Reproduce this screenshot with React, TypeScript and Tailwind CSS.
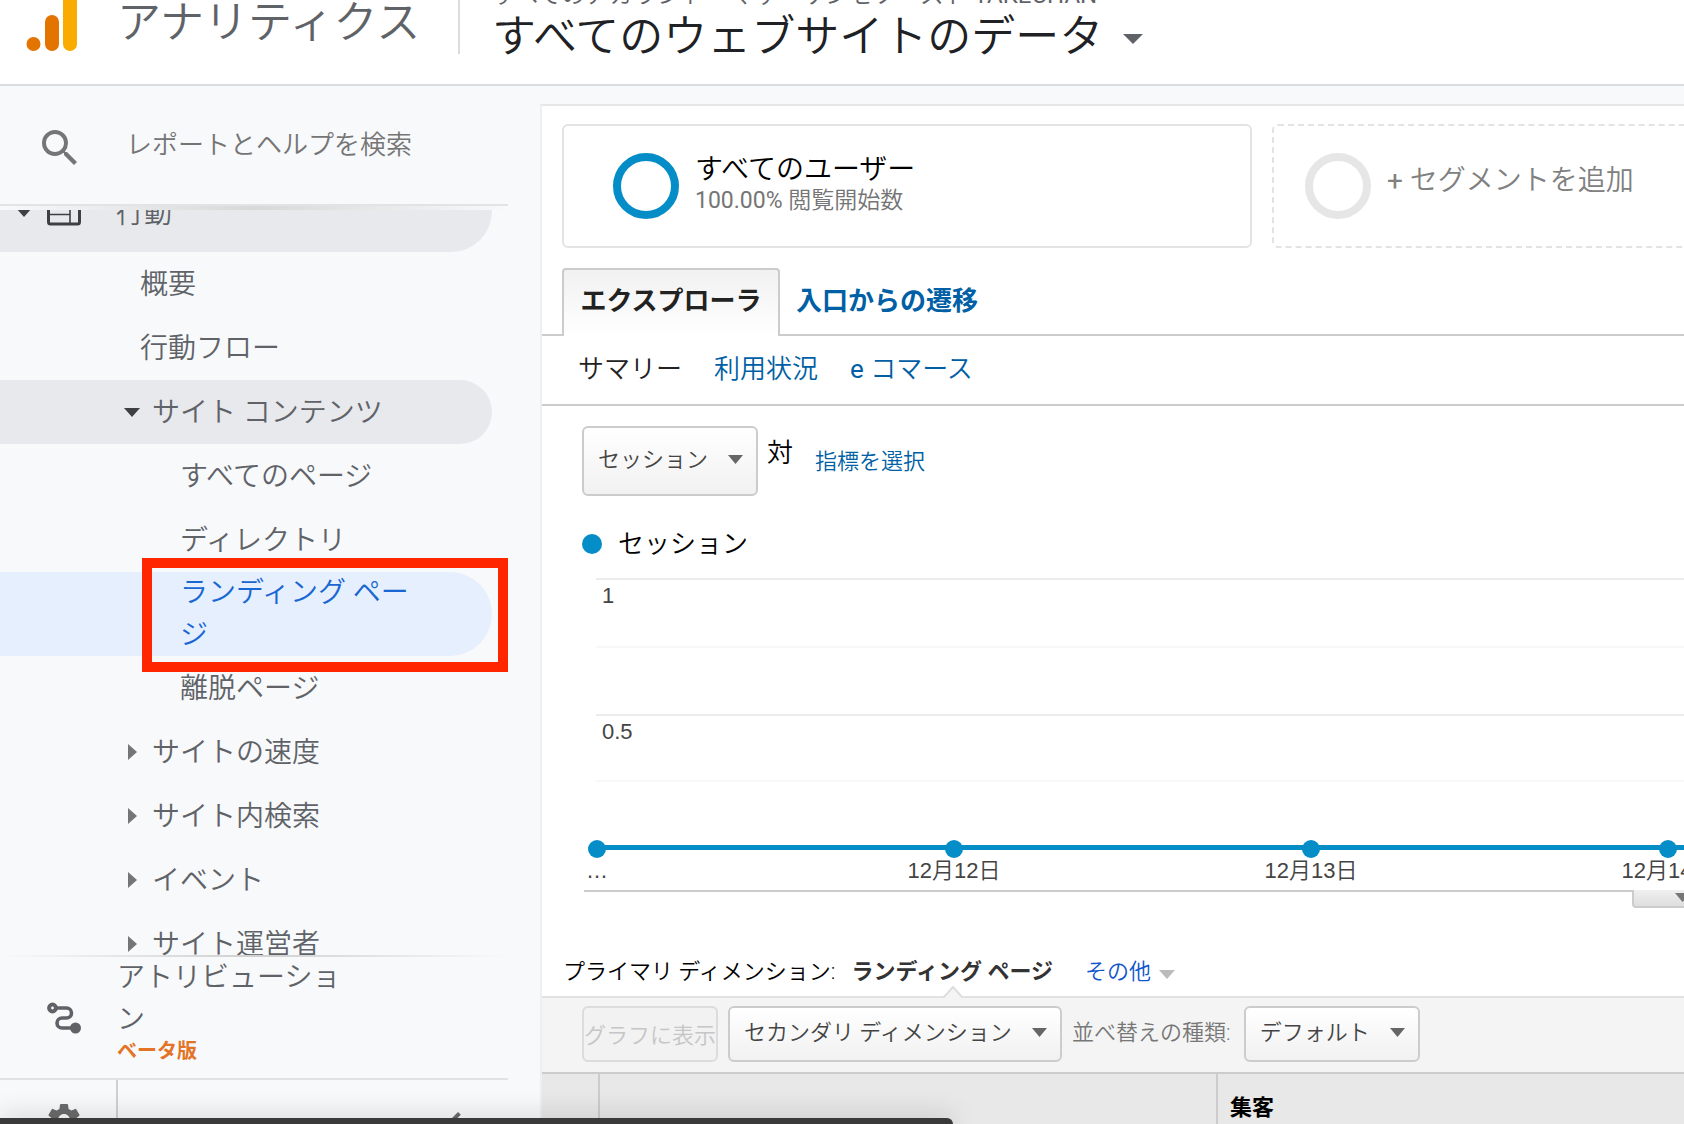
import React from 'react';
import { clsx } from 'clsx';
import { MdChevronLeft, MdSearch, MdSettings } from 'react-icons/md';

interface CaretProps {
  className?: string;
  direction?: 'down' | 'right';
}

/** Small solid triangle used by menus and tree nodes. */
function Caret({ className, direction = 'down' }: CaretProps) {
  return (
    <svg
      className={clsx('shrink-0 fill-current', className)}
      viewBox={direction === 'down' ? '0 0 16 9' : '0 0 9 16'}
      preserveAspectRatio="none"
      aria-hidden="true"
    >
      <path d={direction === 'down' ? 'M0 0h16L8 9z' : 'M0 0v16l9-8z'} />
    </svg>
  );
}

function AnalyticsLogo() {
  return (
    <svg className="h-[52px] w-[52px] shrink-0" viewBox="0 0 52 52" aria-hidden="true">
      <rect x="37" y="-20" width="14" height="71" rx="7" fill="#f9ab00" />
      <rect x="19" y="15" width="14" height="36" rx="7" fill="#e37400" />
      <circle cx="7.5" cy="44" r="7" fill="#e37400" />
    </svg>
  );
}

function BehaviorIcon() {
  return (
    <svg className="h-[30px] w-[34px] shrink-0" viewBox="0 0 34 30" fill="none" stroke="#3c4043" aria-hidden="true">
      <rect x="1.5" y="1" width="31" height="26" rx="2" strokeWidth="3" />
      <path d="M1 9h32" strokeWidth="3" />
      <path d="M3 17.5h20M23 9v18" strokeWidth="1.6" />
    </svg>
  );
}

function AttributionIcon() {
  return (
    <svg className="h-[32px] w-[34px] shrink-0" viewBox="0 0 34 32" fill="none" aria-hidden="true">
      <path
        d="M8 6h11.500a5 5 0 0 1 0 10H15a5 5 0 0 0 0 10h12"
        stroke="#5f6368"
        strokeWidth="3.6"
      />
      <circle cx="5.5" cy="6" r="3.4" stroke="#5f6368" strokeWidth="4" />
      <circle cx="28.5" cy="26" r="5.5" fill="#5f6368" />
    </svg>
  );
}

function Header() {
  return (
    <header className="flex h-[86px] shrink-0 border-b-2 border-[#dadce0] bg-white">
      <div className="flex h-[54px] w-[460px] shrink-0 items-start border-r-2 border-[#dadce0] pl-[26px]">
        <AnalyticsLogo />
        <span className="ml-[39px] text-[44px] leading-[46px] whitespace-nowrap text-[#5f6368]">アナリティクス</span>
      </div>
      <div className="flex flex-col justify-end pb-[19px] pl-8 whitespace-nowrap">
        <span className="h-[28px] shrink-0 text-[24px] leading-[28px] text-[#5f6368]">
          すべてのアカウント &gt; マザーサンセゾースト <span className="font-normal">TAKECHAN</span>
        </span>
        <button type="button" className="flex h-14 shrink-0 items-center gap-5 text-[44px] leading-[56px] text-[#202124]">
          すべてのウェブサイトのデータ
          <Caret className="mt-1 h-[10px] w-[20px] text-[#5f6368]" />
        </button>
      </div>
    </header>
  );
}

interface NavItemProps {
  label: string;
  level?: 1 | 2;
  arrow?: 'down' | 'right';
  highlighted?: boolean;
}

function NavItem({ label, level = 1, arrow, highlighted }: NavItemProps) {
  return (
    <li>
      <a
        href="#"
        className={clsx(
          'mr-4 flex h-16 items-center rounded-r-full pt-[2px]',
          highlighted && 'bg-[#e8e9ed]',
          arrow ? 'pl-[124px]' : level === 1 ? 'pl-[140px]' : 'pl-[180px]',
        )}
      >
        {arrow && (
          <span className="flex w-[28px] pb-[2px]">
            {arrow === 'down' ? (
              <Caret className="h-[9px] w-[16px] text-[#3c4043]" />
            ) : (
              <Caret direction="right" className="ml-1 h-[16px] w-[9px] text-[#757575]" />
            )}
          </span>
        )}
        {label}
      </a>
    </li>
  );
}

function Sidebar() {
  return (
    <aside className="flex w-[508px] shrink-0 flex-col text-[28px] text-[#5f6368]">
      <label className="flex h-[120px] shrink-0 items-center border-b-2 border-[#e2e3e4] pl-[36px]">
        <MdSearch className="mt-[6px] h-12 w-12 shrink-0 text-[#757575]" />
        <input
          type="search"
          aria-label="レポートとヘルプを検索"
          placeholder="レポートとヘルプを検索"
          className="ml-[42px] h-12 min-w-0 flex-1 bg-transparent text-[26px] outline-none placeholder:text-[#757575]"
        />
      </label>
      <div className="h-1 shrink-0 bg-linear-to-r from-transparent via-[#d8d8d8] to-transparent" />

      <nav className="min-h-0 flex-1 overflow-hidden">
        {/* the list is scrolled a little past its first row */}
        <ul className="-mt-10">
          <li>
            <a href="#" className="mr-4 flex h-[82px] items-center rounded-r-full bg-[#e8e9ed] pt-[2px] pl-4">
              <Caret className="h-[9px] w-[16px] text-[#3c4043]" />
              <span className="ml-[15px]">
                <BehaviorIcon />
              </span>
              <span className="ml-[35px] pt-[3px]">行動</span>
            </a>
          </li>
          <NavItem label="概要" />
          <NavItem label="行動フロー" />
          <NavItem label="サイト コンテンツ" arrow="down" highlighted />
          <NavItem label="すべてのページ" level={2} />
          <NavItem label="ディレクトリ" level={2} />
          <li className="relative">
            <a
              href="#"
              aria-current="page"
              className="mr-4 block rounded-r-full bg-[#e6effd] pr-[60px] pl-[180px] leading-[42px] text-[#1967d2]"
            >
              ランディング ページ
            </a>
            <div className="pointer-events-none absolute -top-[14px] right-0 -bottom-4 left-[142px] z-10 border-[10px] border-[#ff2600]" />
          </li>
          <NavItem label="離脱ページ" level={2} />
          <NavItem label="サイトの速度" arrow="right" />
          <NavItem label="サイト内検索" arrow="right" />
          <NavItem label="イベント" arrow="right" />
          <NavItem label="サイト運営者" arrow="right" />
        </ul>
      </nav>

      <div className="h-[2px] shrink-0 bg-linear-to-r from-transparent via-[#d0d0d0] to-transparent" />
      <a href="#" className="flex h-[121px] shrink-0 items-center pl-[47px]">
        <AttributionIcon />
        <span className="ml-9 w-[240px] pb-[18px] leading-[42px]">
          アトリビューション
          <span className="block text-[20px] leading-[20px] font-bold text-[#e37426]">ベータ版</span>
        </span>
      </a>
      <div className="flex h-[46px] shrink-0 border-t-2 border-[#e0e2e3]">
        <button
          type="button"
          aria-label="管理"
          className="flex w-[118px] shrink-0 items-start border-r-2 border-[#cfd0d1] pt-5 pl-11 text-[#6b6b6b]"
        >
          <MdSettings className="h-10 w-10 shrink-0" />
        </button>
        <button type="button" aria-label="折りたたむ" className="flex flex-1 items-start justify-end pt-5 pr-[30px] text-[#6b6b6b]">
          <MdChevronLeft className="h-12 w-12 shrink-0" />
        </button>
      </div>
    </aside>
  );
}

function Segments() {
  return (
    <div className="flex gap-5 px-5 pt-[18px]">
      <div className="flex h-[124px] w-[690px] shrink-0 items-center rounded-md border-2 border-[#e3e3e3] pl-[49px]">
        <span className="h-[66px] w-[66px] shrink-0 rounded-full border-8 border-[#058dc7]" />
        <div className="ml-4 pb-1 whitespace-nowrap">
          <p className="text-[28px] leading-[34px] text-black">すべてのユーザー</p>
          <p className="text-[23px] leading-[28px] text-[#757575]">
            <span className="font-normal">100.00%</span> 閲覧開始数
          </p>
        </div>
      </div>
      <button
        type="button"
        className="-mr-16 flex h-[124px] flex-1 items-center rounded-md border-2 border-dashed border-[#e3e3e3] pl-[31px] text-[28px] whitespace-nowrap text-[#808080]"
      >
        <span className="h-[66px] w-[66px] shrink-0 rounded-full border-8 border-[#e6e6e6]" />
        <span className="ml-4 pb-[10px]">
          <span className="font-normal">+</span> セグメントを追加
        </span>
      </button>
    </div>
  );
}

function Tabs() {
  return (
    <>
      <div className="mt-5 flex text-[26px] font-bold whitespace-nowrap">
        <span className="w-5 border-b-2 border-[#cccccc]" />
        <button
          type="button"
          className="h-[68px] w-[218px] rounded-t-sm border-2 border-b-0 border-[#cccccc] bg-linear-to-b from-[#f1f1f1] to-white pb-1 text-[#222222]"
        >
          エクスプローラ
        </button>
        <div className="flex flex-1 items-center border-b-2 border-[#cccccc] pl-4">
          <a href="#" className="text-[#005fa5]">入口からの遷移</a>
        </div>
      </div>
      <div className="flex h-[70px] items-center gap-8 border-b-2 border-[#cccccc] pb-[2px] pl-9 text-[26px] whitespace-nowrap text-[#005fa5]">
        <span className="text-[#222222]">サマリー</span>
        <a href="#">利用状況</a>
        <a href="#">
          <span className="font-normal">e</span> コマース
        </a>
      </div>
    </>
  );
}

interface DropdownProps {
  label: string;
  value: string;
  className?: string;
}

function Dropdown({ label, value, className }: DropdownProps) {
  return (
    <span className={clsx('relative flex shrink-0 items-center', className)}>
      <select
        aria-label={label}
        defaultValue={value}
        className="h-full w-full appearance-none rounded-md border-2 border-[#cccccc] bg-linear-to-b from-white to-[#f1f1f1] pb-[3px] pl-[14px] text-[22px] text-[#444444] outline-none"
      >
        <option>{value}</option>
      </select>
      <Caret className="pointer-events-none absolute right-[15px] mb-1 h-[9px] w-[15px] text-[#666666]" />
    </span>
  );
}

const POINTS = [
  { x: 13, label: '…' },
  { x: 370, label: '12月12日' },
  { x: 727, label: '12月13日' },
  { x: 1084, label: '12月14日' },
];

const GRID = [
  { label: '1', line: 'border-[#ececec]', height: 'h-[68px]' },
  { label: '', line: 'border-[#f8f8f8]', height: 'h-[68px]' },
  { label: '0.5', line: 'border-[#ececec]', height: 'h-[66px]' },
  { label: '', line: 'border-[#f8f8f8]', height: 'h-[58px]' },
];

/** Daily sessions; every day sits on the zero line. */
function SessionsChart() {
  return (
    <div className="relative ml-[42px] font-['Liberation_Sans','Noto_Sans_CJK_JP',sans-serif] text-[22px] text-[#444444]">
      {GRID.map((row, i) => (
        <div key={i} className={clsx('ml-3 border-t-2 pt-[2px] pl-[6px] leading-[28px]', row.line, row.height)}>
          {row.label}
        </div>
      ))}
      <svg className="block h-[20px] w-full overflow-visible" aria-hidden="true">
        <rect x="13" y="7" width="100%" height="5" fill="#058dc7" />
        {POINTS.map((p) => (
          <circle key={p.x} cx={p.x} cy="11" r="9" fill="#058dc7" />
        ))}
      </svg>
      <div className="h-[34px] border-b-2 border-[#cccccc] pl-[13px]">
        <div className="flex leading-[26px]">
          {POINTS.map((p) => (
            <span key={p.x} className="flex w-[357px] shrink-0">
              <span className="-ml-[60px] w-[120px] text-center">{p.label}</span>
            </span>
          ))}
        </div>
      </div>
      <button
        type="button"
        aria-label="グラフを折りたたむ"
        className="absolute -right-[48px] -bottom-[16px] flex h-[18px] w-[100px] justify-center rounded-b-sm border-2 border-t-0 border-[#cccccc] bg-linear-to-b from-[#f0f0f0] to-[#dedede] pt-[3px] text-[#777777]"
      >
        <Caret className="h-[9px] w-[15px]" />
      </button>
    </div>
  );
}

function DimensionBar() {
  return (
    <>
      <div className="mt-[62px] flex h-[42px] items-start pl-[21px] text-[22px] leading-[36px] whitespace-nowrap text-black">
        プライマリ ディメンション:
        <span className="relative ml-4 font-bold text-[#333333]">
          ランディング ページ
          <svg className="absolute top-[32px] left-[92px] h-[12px] w-[20px]" viewBox="0 0 20 12" aria-hidden="true">
            <path d="M0 12L10 1l10 11" fill="#f4f4f4" stroke="#dddddd" strokeWidth="2" />
          </svg>
        </span>
        <button type="button" className="ml-8 flex items-center gap-2 text-[#1155cc]">
          その他
          <Caret className="mt-1 h-[9px] w-[16px] text-[#bbbbbb]" />
        </button>
      </div>
      <div className="flex h-[76px] items-center border-t-2 border-[#e2e2e2] bg-[#f4f4f4] pb-[2px] pl-10 text-[22px] whitespace-nowrap">
        <button
          type="button"
          disabled
          className="h-14 w-[136px] shrink-0 rounded-md border-2 border-[#dcdcdc] bg-[#f2f2f2] pt-[2px] text-[#c6c6c6]"
        >
          グラフに表示
        </button>
        <Dropdown label="セカンダリ ディメンション" value="セカンダリ ディメンション" className="ml-[10px] h-14 w-[334px]" />
        <label className="ml-[10px] flex items-center text-[#777777]">
          <span className="pb-1">並べ替えの種類:</span>
          <Dropdown label="並べ替えの種類" value="デフォルト" className="ml-[13px] h-14 w-[176px]" />
        </label>
      </div>
    </>
  );
}

function ReportTable() {
  return (
    <table className="h-[52px] w-full border-collapse border-t-2 border-[#cccccc] bg-[#e8e8e8] text-left text-[22px] text-black">
      <thead>
        <tr>
          <th className="w-[57px] border-r-2 border-[#cccccc]" />
          <th className="w-[618px] border-r-2 border-[#cccccc]" />
          <th className="pt-[18px] pl-3 leading-[30px] font-bold">集客</th>
        </tr>
      </thead>
    </table>
  );
}

function Report() {
  return (
    <main className="mt-[18px] ml-8 flex min-w-0 flex-1 flex-col overflow-hidden border-t-2 border-l-2 border-t-[#e6e6e6] border-l-[#efefef] bg-white">
      <Segments />
      <Tabs />
      <div className="flex h-[110px] items-center pl-10 text-[22px] whitespace-nowrap">
        <Dropdown label="指標" value="セッション" className="h-[70px] w-[176px]" />
        <span className="ml-[9px] pb-4 text-[26px] text-black">対</span>
        <a href="#" className="ml-[22px] text-[#005fa5]">指標を選択</a>
      </div>
      <div className="flex h-[62px] items-center gap-4 pb-[6px] pl-10 text-[26px] text-black">
        <span className="h-5 w-5 rounded-full bg-[#058dc7]" />
        セッション
      </div>
      <SessionsChart />
      <DimensionBar />
      <ReportTable />
    </main>
  );
}

export default function App() {
  return (
    <div className="relative flex h-screen flex-col overflow-hidden bg-[#f8f9fb] font-[Roboto,'Noto_Sans_CJK_JP',sans-serif] font-[350]">
      <Header />
      <div className="flex min-h-0 flex-1">
        <Sidebar />
        <Report />
      </div>
      {/* status bubble over the bottom edge */}
      <div className="absolute bottom-0 left-0 h-[6px] w-[953px] rounded-tr-md bg-[#3a3a3a] shadow-[0_0_24px_rgba(0,0,0,0.35)]" />
    </div>
  );
}
